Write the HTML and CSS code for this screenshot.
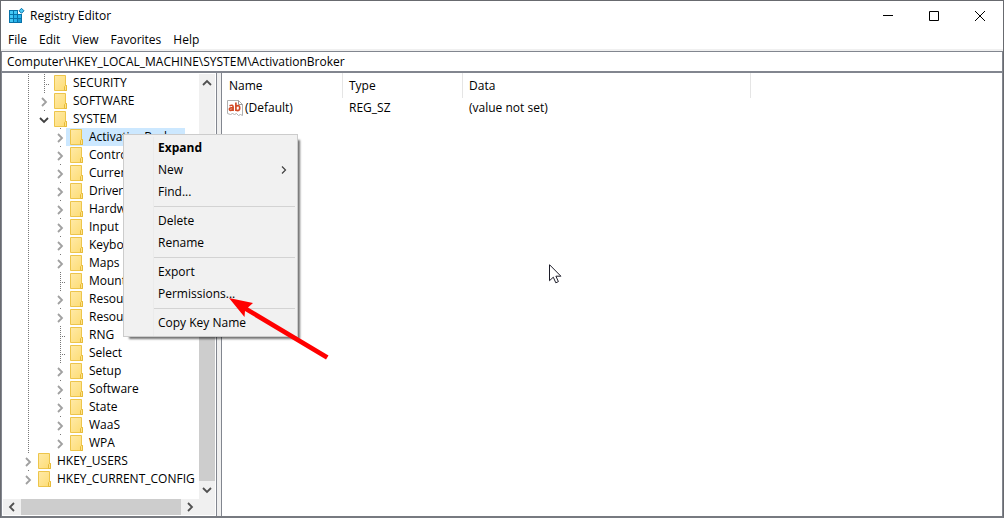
FILE: index.html
```html
<!DOCTYPE html>
<html lang="en">
<head>
<meta charset="utf-8">
<title>Registry Editor</title>
<link rel="stylesheet" href="styles.css">
</head>
<body>
<svg class="defs" aria-hidden="true">
  <symbol id="folder" viewBox="0 0 13 16">
    <defs><linearGradient id="fg" x1="0" y1="0" x2="1" y2="1"><stop offset="0" stop-color="#ffeaa8"/><stop offset="1" stop-color="#fddc73"/></linearGradient></defs>
    <path d="M.5.5h11v10h1v5H.5z" fill="url(#fg)" stroke="#edc54b"/>
    <path d="M10.5 15.500v-4l1-1h1v5z" fill="#ffe28a" stroke="#e6bb39"/>
  </symbol>
  <symbol id="right" viewBox="0 0 10 10"><path d="M3 1l4 4-4 4" fill="none" stroke="currentColor" stroke-width="1.800"/></symbol>
  <symbol id="submenu" viewBox="0 0 10 10"><path d="M4 1.500L7.500 5 4 8.500" fill="none" stroke="currentColor" stroke-width="1.200"/></symbol>
  <symbol id="down" viewBox="0 0 10 10"><path d="M1 3l4 4 4-4" fill="none" stroke="currentColor" stroke-width="1.800"/></symbol>
  <symbol id="up" viewBox="0 0 10 10"><path d="M1 7l4-4 4 4" fill="none" stroke="currentColor" stroke-width="1.800"/></symbol>
  <symbol id="left" viewBox="0 0 10 10"><path d="M7 1L3 5l4 4" fill="none" stroke="currentColor" stroke-width="1.800"/></symbol>
</svg>
<div class="window">
  <header class="titlebar">
    <svg class="app-icon" viewBox="0 0 16 16" aria-hidden="true">
      <path d="M0 2h9v4h4v9H0z" fill="#0872a8"/>
      <path d="M1 3h3v3H1zM1 7h3v3H1zM1 11h3v3H1zM5 3h3v3H5z" fill="#43c8f5"/>
      <path d="M5 7h3v3H5zM5 11h3v3H5zM9 7h3v3H9z" fill="#27b3eb"/>
      <path d="M9 11h3v3H9z" fill="#169ad6"/>
      <path d="M12.500.3l2.500 2.500-2.500 2.500L10 2.800z" fill="#4ccaf5" stroke="#0872a8"/>
    </svg>
    <h1 class="title">Registry Editor</h1>
    <div class="controls">
      <button class="control" aria-label="Minimize"><svg viewBox="0 0 10 10"><path d="M0 4.500h10" stroke="#000"/></svg></button>
      <button class="control" aria-label="Maximize"><svg viewBox="0 0 10 10"><path d="M.5.5h9v9h-9z" fill="none" stroke="#000"/></svg></button>
      <button class="control" aria-label="Close"><svg viewBox="0 0 10 10"><path d="M0 0l10 10M10 0L0 10" stroke="#000"/></svg></button>
    </div>
  </header>
  <nav class="menubar">
    <button>File</button><button>Edit</button><button>View</button><button>Favorites</button><button>Help</button>
  </nav>
  <input class="address" type="text" aria-label="Address" value="Computer\HKEY_LOCAL_MACHINE\SYSTEM\ActivationBroker">
  <main class="panes">
    <section class="tree-pane">
      <div class="tree-row-area">
        <ul class="tree">
          <li class="row"><i class="line"></i><i class="twig leaf"></i><span class="node"><svg class="folder"><use href="#folder"/></svg>SECURITY</span></li>
          <li class="row"><i class="line"></i><button class="twig" aria-label="Expand SOFTWARE"><svg><use href="#right"/></svg></button><span class="node"><svg class="folder"><use href="#folder"/></svg>SOFTWARE</span></li>
          <li class="row"><i class="line"></i><button class="twig open" aria-label="Collapse SYSTEM"><svg><use href="#down"/></svg></button><span class="node"><svg class="folder"><use href="#folder"/></svg>SYSTEM</span></li>
          <li class="row"><i class="line"></i><i class="blank"></i><button class="twig" aria-label="Expand ActivationBroker"><svg><use href="#right"/></svg></button><span class="node selected"><svg class="folder"><use href="#folder"/></svg>ActivationBroker</span></li>
          <li class="row"><i class="line"></i><i class="blank"></i><button class="twig" aria-label="Expand key"><svg><use href="#right"/></svg></button><span class="node"><svg class="folder"><use href="#folder"/></svg>Control</span></li>
          <li class="row"><i class="line"></i><i class="blank"></i><button class="twig" aria-label="Expand key"><svg><use href="#right"/></svg></button><span class="node"><svg class="folder"><use href="#folder"/></svg>Current</span></li>
          <li class="row"><i class="line"></i><i class="blank"></i><button class="twig" aria-label="Expand key"><svg><use href="#right"/></svg></button><span class="node"><svg class="folder"><use href="#folder"/></svg>DriverD</span></li>
          <li class="row"><i class="line"></i><i class="blank"></i><button class="twig" aria-label="Expand key"><svg><use href="#right"/></svg></button><span class="node"><svg class="folder"><use href="#folder"/></svg>Hardwa</span></li>
          <li class="row"><i class="line"></i><i class="blank"></i><button class="twig" aria-label="Expand Input"><svg><use href="#right"/></svg></button><span class="node"><svg class="folder"><use href="#folder"/></svg>Input</span></li>
          <li class="row"><i class="line"></i><i class="blank"></i><button class="twig" aria-label="Expand key"><svg><use href="#right"/></svg></button><span class="node"><svg class="folder"><use href="#folder"/></svg>Keyboa</span></li>
          <li class="row"><i class="line"></i><i class="blank"></i><button class="twig" aria-label="Expand Maps"><svg><use href="#right"/></svg></button><span class="node"><svg class="folder"><use href="#folder"/></svg>Maps</span></li>
          <li class="row"><i class="line"></i><i class="blank"></i><i class="twig leaf"></i><span class="node"><svg class="folder"><use href="#folder"/></svg>Mount</span></li>
          <li class="row"><i class="line"></i><i class="blank"></i><button class="twig" aria-label="Expand key"><svg><use href="#right"/></svg></button><span class="node"><svg class="folder"><use href="#folder"/></svg>Resour</span></li>
          <li class="row"><i class="line"></i><i class="blank"></i><button class="twig" aria-label="Expand key"><svg><use href="#right"/></svg></button><span class="node"><svg class="folder"><use href="#folder"/></svg>Resour</span></li>
          <li class="row"><i class="line"></i><i class="blank"></i><i class="twig leaf"></i><span class="node"><svg class="folder"><use href="#folder"/></svg>RNG</span></li>
          <li class="row"><i class="line"></i><i class="blank"></i><i class="twig leaf"></i><span class="node"><svg class="folder"><use href="#folder"/></svg>Select</span></li>
          <li class="row"><i class="line"></i><i class="blank"></i><button class="twig" aria-label="Expand Setup"><svg><use href="#right"/></svg></button><span class="node"><svg class="folder"><use href="#folder"/></svg>Setup</span></li>
          <li class="row"><i class="line"></i><i class="blank"></i><button class="twig" aria-label="Expand Software"><svg><use href="#right"/></svg></button><span class="node"><svg class="folder"><use href="#folder"/></svg>Software</span></li>
          <li class="row"><i class="line"></i><i class="blank"></i><button class="twig" aria-label="Expand State"><svg><use href="#right"/></svg></button><span class="node"><svg class="folder"><use href="#folder"/></svg>State</span></li>
          <li class="row"><i class="line"></i><i class="blank"></i><button class="twig" aria-label="Expand WaaS"><svg><use href="#right"/></svg></button><span class="node"><svg class="folder"><use href="#folder"/></svg>WaaS</span></li>
          <li class="row"><i class="line"></i><i class="blank"></i><button class="twig" aria-label="Expand WPA"><svg><use href="#right"/></svg></button><span class="node"><svg class="folder"><use href="#folder"/></svg>WPA</span></li>
          <li class="row"><button class="twig" aria-label="Expand HKEY_USERS"><svg><use href="#right"/></svg></button><span class="node"><svg class="folder"><use href="#folder"/></svg>HKEY_USERS</span></li>
          <li class="row"><button class="twig" aria-label="Expand HKEY_CURRENT_CONFIG"><svg><use href="#right"/></svg></button><span class="node"><svg class="folder"><use href="#folder"/></svg>HKEY_CURRENT_CONFIG</span></li>
        </ul>
        <div class="scroll vertical">
          <button aria-label="Scroll up"><svg><use href="#up"/></svg></button>
          <div class="track"><div class="thumb"></div></div>
          <button aria-label="Scroll down"><svg><use href="#down"/></svg></button>
        </div>
      </div>
      <div class="scroll horizontal">
        <button aria-label="Scroll left"><svg><use href="#left"/></svg></button>
        <div class="track"><div class="thumb"></div></div>
        <button aria-label="Scroll right"><svg><use href="#right"/></svg></button>
      </div>
    </section>
    <section class="list-pane">
      <table class="values">
        <thead><tr><th class="name">Name</th><th class="type">Type</th><th class="data">Data</th></tr></thead>
        <tbody><tr>
          <td><span class="value-name"><svg class="value-icon" viewBox="0 0 16 16" aria-hidden="true">
            <path d="M.5.5h11l4 4v11l-2-1-2 1-2-2-2 1-2-1-2 1-3-1z" fill="#fff" stroke="#b0b0b0"/><path d="M11.500.5v4h4" fill="none" stroke="#999"/>
            <g fill="none" stroke="#d24a26" stroke-width="1.700"><path d="M2.500 5.700q3.600-1.400 3.600 1.300v4M6 7.700q-3.700-.2-3.600 1.600.3 2 3.600.3M8.900 2.500V11M8.900 6.300q3.800-1.900 3.800 1.700t-3.800 2.100"/></g>
          </svg>(Default)</span></td><td>REG_SZ</td><td>(value not set)</td>
        </tr></tbody>
      </table>
    </section>
  </main>
</div>
<div class="context-menu" role="menu">
  <button role="menuitem" class="default">Expand</button>
  <button role="menuitem">New<svg><use href="#submenu"/></svg></button>
  <button role="menuitem">Find...</button>
  <hr>
  <button role="menuitem">Delete</button>
  <button role="menuitem">Rename</button>
  <hr>
  <button role="menuitem">Export</button>
  <button role="menuitem">Permissions...</button>
  <hr>
  <button role="menuitem">Copy Key Name</button>
</div>
<svg class="pointer-arrow" viewBox="0 0 100 62" aria-hidden="true"><path d="M0 0l24 5-5 4.500 80.500 48-2.500 4L16 13l-.500 6z" fill="#f00"/></svg>
<svg class="cursor" viewBox="0 0 13 20" aria-hidden="true"><path d="M.5.700v16l3.800-3.500 2.500 5.600 2.600-1.200-2.500-5.400h5z" fill="#fff" stroke="#1c1c28"/></svg>
</body>
</html>
```
FILE: styles.css
```css
* { box-sizing: border-box; }

body {
  margin: 0;
  font: 12px/18px "Open Sans", "Noto Sans", sans-serif;
  color: #000;
  overflow: hidden;
}

button, input {
  font: inherit;
  color: inherit;
  border: 0;
  padding: 0;
  background: none;
}

.defs { position: absolute; width: 0; height: 0; }

.window {
  display: flex;
  flex-direction: column;
  height: 100vh;
  border: 1px solid #686a6f;
  border-bottom: 2px solid #777a80;
  background: #fff;
}

.titlebar { display: flex; align-items: center; height: 30px; flex: none; padding-left: 8px; }
.app-icon { width: 16px; height: 16px; margin-right: 5px; }
.title { margin: 0; font-size: 12px; font-weight: 400; flex: 1; }
.controls { display: flex; align-self: stretch; }
.control { width: 46px; display: grid; place-items: center; }
.control svg { width: 10px; height: 10px; }

.menubar {
  display: flex;
  gap: 12px;
  height: 20px;
  flex: none;
  padding: 0 7px;
  border-bottom: 2px solid #f0f0f0;
}

.address {
  flex: none;
  width: 100%;
  height: 22px;
  padding: 0 5px;
  border: 1px solid #82868f;
  border-bottom-width: 2px;
  outline: none;
}

.panes { display: flex; flex: 1; min-height: 0; background: #f0f0f0; }

.tree-pane {
  display: flex;
  flex-direction: column;
  width: 216px;
  padding: 1px;
  border: solid #82868f;
  border-width: 0 1px;
  background: #fff;
}

.tree-row-area { display: flex; flex: 1; min-height: 0; }

.tree { flex: 1; min-width: 0; margin: 0; padding: 0 0 0 17px; list-style: none; overflow: hidden; }
.row { display: flex; height: 18px; white-space: nowrap; }
.line, .blank { flex: none; width: 16px; }
.line { background: repeating-linear-gradient(#777 0 1px, transparent 1px 2px) 8px 0 / 1px 100% no-repeat; }

.twig {
  flex: none;
  width: 14px;
  padding-left: 3px;
  display: flex;
  align-items: center;
  color: #a0a0a0;
  background: linear-gradient(#777, #777) 8px 0 / 1px 1px no-repeat;
}
.twig svg { width: 10px; height: 10px; flex: none; margin-top: 2px; }
.twig.open { color: #404040; }
.twig.leaf {
  background:
    repeating-linear-gradient(#777 0 1px, transparent 1px 2px) 8px 0 / 1px 100% no-repeat,
    repeating-linear-gradient(90deg, #777 0 1px, transparent 1px 2px) 8px 10px / 6px 1px no-repeat;
}

.node { display: flex; align-items: center; padding: 0 3px 0 4px; }
.selected { background: #cce8ff; }
.folder { width: 13px; height: 16px; margin-right: 6px; }

.scroll { display: flex; flex: none; background: #f0f0f0; color: #505050; }
.scroll button { display: grid; place-items: center; width: 16px; height: 18px; flex: none; }
.scroll svg { width: 10px; height: 10px; }
.track { flex: 1; display: flex; }
.thumb { background: #cdcdcd; }
.vertical { flex-direction: column; width: 16px; }
.vertical .track { flex-direction: column; justify-content: flex-end; }
.vertical .thumb { height: 75%; }
.horizontal { height: 16px; padding-right: 16px; }
.horizontal button { width: 18px; height: 16px; }
.horizontal .thumb { flex: 1; }

.list-pane { flex: 1; min-width: 0; margin-left: 4px; border: solid #82868f; border-width: 0 1px; background: #fff; overflow: hidden; }

.values { border-collapse: separate; border-spacing: 0; table-layout: fixed; width: 529px; }
.values th { height: 25px; padding: 0 6px; text-align: left; font-weight: 400; border-right: 1px solid #e5e5e5; }
.values td { height: 20px; padding: 0 6px; }
.values td:first-child { padding-left: 5px; }
.values .name { width: 121px; padding-left: 7px; }
.type { width: 120px; }
.value-name { display: flex; align-items: center; gap: 2px; }
.value-icon { width: 16px; height: 16px; }

.context-menu {
  position: absolute;
  left: 123px;
  top: 134px;
  width: 175px;
  padding: 2px;
  border: 1px solid #ccc;
  background: linear-gradient(#ebebeb, #ebebeb) 29px 2px / 1px 100% no-repeat #f1f1f1;
  box-shadow: 4px 4px 2px -2px rgba(0, 0, 0, .55);
}
.context-menu button { display: flex; align-items: center; justify-content: space-between; width: 100%; height: 22px; padding: 0 7px 0 32px; }
.context-menu .default { font-weight: 700; }
.context-menu svg { width: 10px; height: 10px; color: #404040; }
.context-menu hr { margin: 3px 0 3px 28px; border: 0; height: 1px; background: #d3d3d3; }

.pointer-arrow { position: absolute; left: 229px; top: 298px; width: 100px; height: 62px; }
.cursor { position: absolute; left: 549px; top: 264px; width: 13px; height: 20px; }
```
